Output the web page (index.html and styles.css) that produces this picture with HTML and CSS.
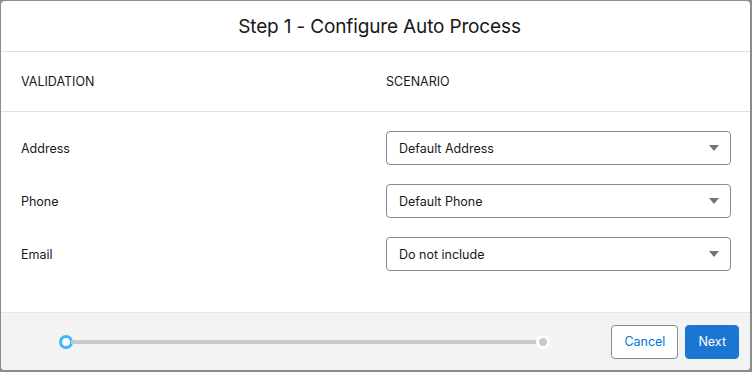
FILE: index.html
```
<!DOCTYPE html>
<html lang="en">
<head>
    <meta charset="UTF-8">
    <title>Step 1 - Configure Auto Process</title>
    <link rel="stylesheet" href="styles.css">
</head>
<body>
    <div class="modal">
        <div class="modal-header">
            <h2>Step 1 - Configure Auto Process</h2>
        </div>

        <div class="modal-body">
            <div class="row head">
                <div class="col">VALIDATION</div>
                <div class="col">SCENARIO</div>
            </div>

            <div class="rows">
                <div class="row">
                    <div class="col">Address</div>
                    <div class="col">
                        <div class="select">Default Address<span class="caret"></span></div>
                    </div>
                </div>
                <div class="row">
                    <div class="col">Phone</div>
                    <div class="col">
                        <div class="select">Default Phone<span class="caret"></span></div>
                    </div>
                </div>
                <div class="row">
                    <div class="col">Email</div>
                    <div class="col">
                        <div class="select">Do not include<span class="caret"></span></div>
                    </div>
                </div>
            </div>
        </div>

        <div class="modal-footer">
            <div class="progress">
                <span class="step active"></span>
                <span class="bar"></span>
                <span class="step"></span>
            </div>
            <div class="buttons">
                <button class="btn neutral">Cancel</button>
                <button class="btn brand">Next</button>
            </div>
        </div>
    </div>
</body>
</html>
```

FILE: styles.css
```
html, body {
    margin: 0;
    height: 100%;
}

body {
    background: #8c8c8c;
    font-family: "Inter", "Liberation Sans", sans-serif;
    color: #181818;
    padding: 1px 2px 2px 1px;
    box-sizing: border-box;
}

.modal {
    background: #fff;
    border-radius: 4px;
    height: 100%;
    display: flex;
    flex-direction: column;
    overflow: hidden;
}

.modal-header {
    height: 50px;
    border-bottom: 1px solid #e0e0e0;
    display: flex;
    align-items: center;
    justify-content: center;
    padding-left: 8px;
}

.modal-header h2 {
    margin: 0;
    font-size: 19px;
    font-weight: 400;
    letter-spacing: -0.15px;
}

.modal-body {
    flex: 1;
    font-size: 12.5px;
}

.row {
    display: grid;
    grid-template-columns: 365px 345px;
    align-items: center;
    padding-left: 20px;
}

.row.head {
    height: 59px;
    border-bottom: 1px solid #e0e0e0;
}

.rows {
    padding-top: 19px;
    display: flex;
    flex-direction: column;
    gap: 19px;
}

.select {
    position: relative;
    height: 34px;
    box-sizing: border-box;
    border: 1px solid #8a8a8a;
    border-radius: 4px;
    display: flex;
    align-items: center;
    padding-left: 12px;
}

.caret {
    position: absolute;
    right: 11px;
    top: 13px;
    width: 0;
    height: 0;
    border-left: 5px solid transparent;
    border-right: 5px solid transparent;
    border-top: 6px solid #747474;
}

.modal-footer {
    height: 57px;
    background: #f3f3f3;
    border-top: 1px solid #e5e5e5;
    display: flex;
    align-items: center;
    justify-content: space-between;
    padding: 0 11px 0 58px;
}

.progress {
    display: flex;
    align-items: center;
    width: 491px;
}

.step {
    width: 8px;
    height: 8px;
    border-radius: 50%;
    background: #c9c9c9;
    border: 3px solid #fff;
    flex: none;
}

.step.active {
    background: #fff;
    border-color: #3ab8ff;
    margin-right: -2px;
}

.bar {
    flex: 1;
    height: 4px;
    background: #c9c9c9;
    margin-right: -2px;
}

.buttons {
    display: flex;
    gap: 7px;
}

.btn {
    font-family: inherit;
    font-size: 12.5px;
    height: 34px;
    border-radius: 4px;
    padding: 0 12px;
    cursor: pointer;
}

.btn.neutral {
    background: #fff;
    border: 1px solid #8a8a8a;
    color: #0176d3;
}

.btn.brand {
    background: #1b75d3;
    border: 1px solid #1b75d3;
    color: #fff;
}
```
